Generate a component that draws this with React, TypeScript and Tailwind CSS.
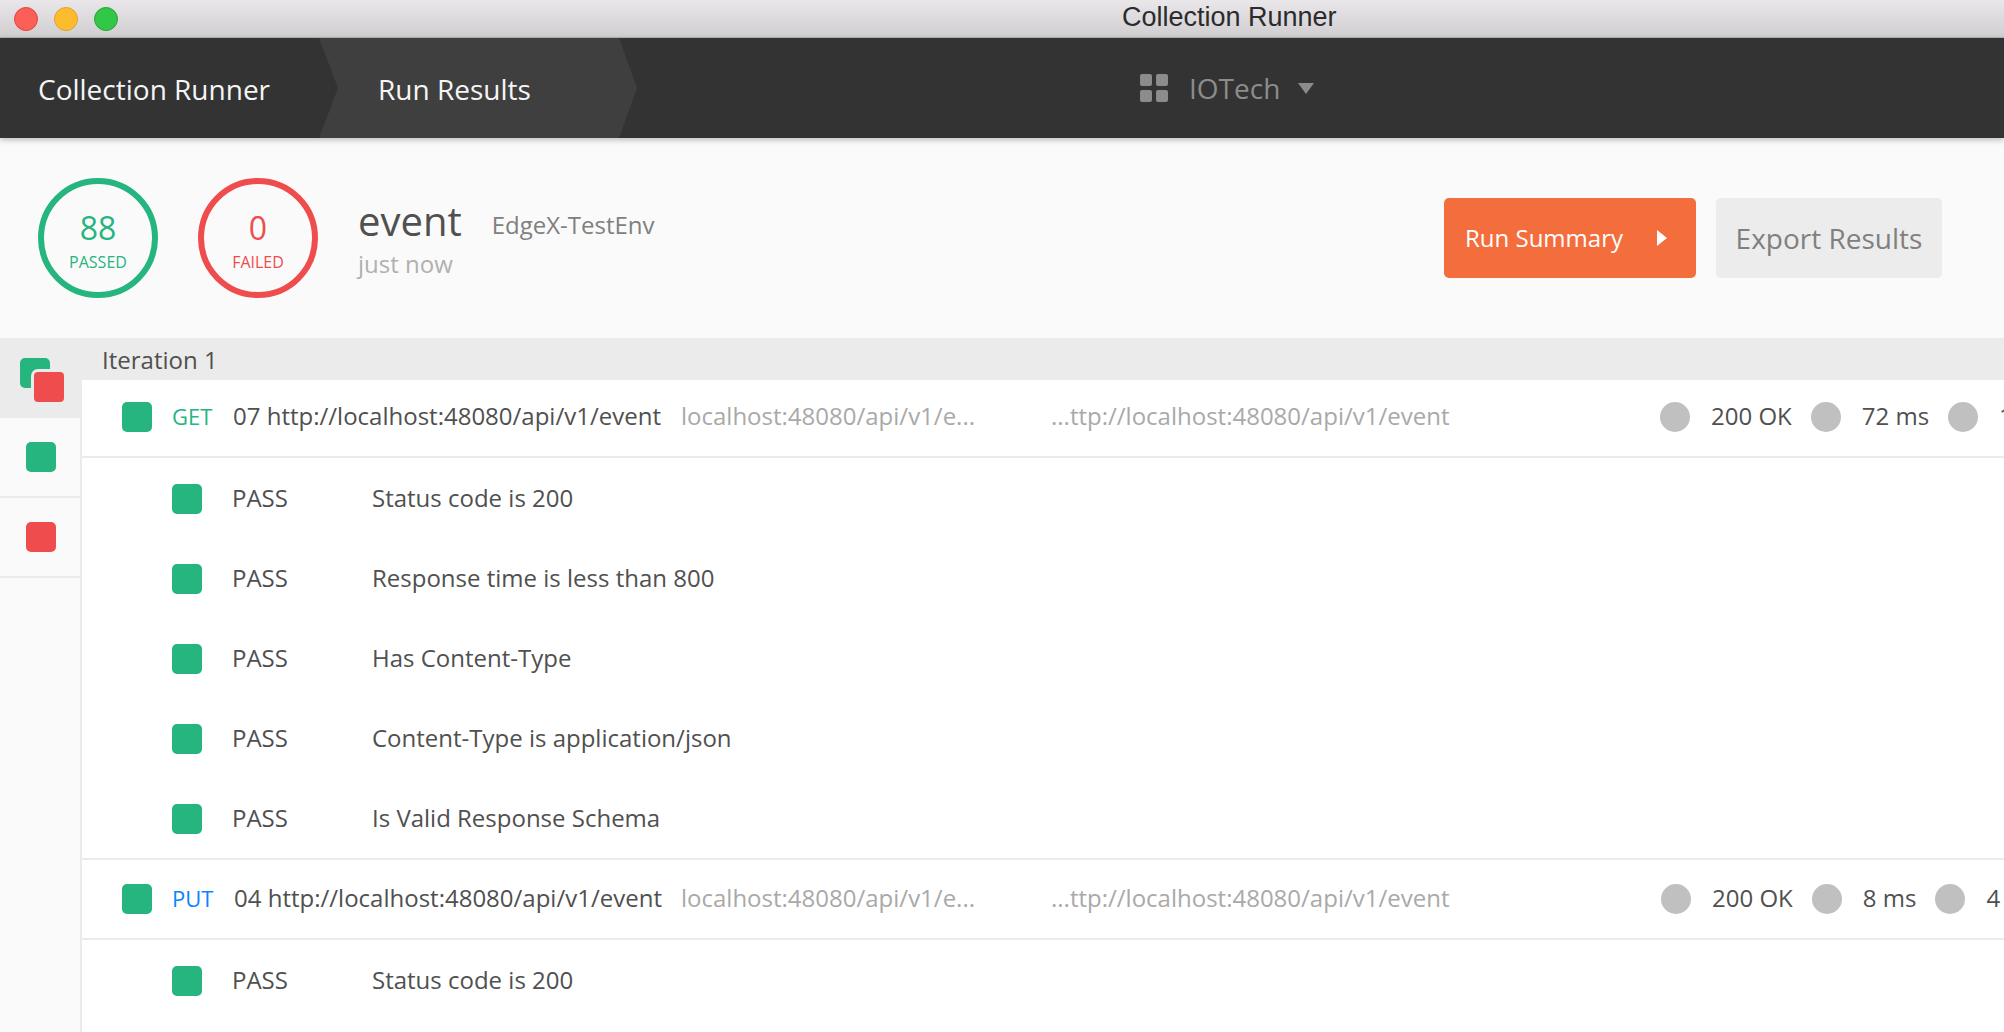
const FONT = "font-['Open_Sans',sans-serif]"

const tests1 = [
  'Status code is 200',
  'Response time is less than 800',
  'Has Content-Type',
  'Content-Type is application/json',
  'Is Valid Response Schema',
]

function Square({ color = 'bg-[#26b47f]' }: { color?: string }) {
  return <span className={`block h-[30px] w-[30px] shrink-0 rounded-[5px] ${color}`} />
}

function Dot() {
  return <span className="block h-[30px] w-[30px] shrink-0 rounded-full bg-[#c0c0c0]" />
}

function RequestRow({ method, color, name, stats, rowClass, methodWidth, nameWidth, statsWidth }: {
  method: string
  color: string
  name: string
  stats: string[]
  rowClass: string
  methodWidth: string
  nameWidth: string
  statsWidth: string
}) {
  return (
    <div className={`flex shrink-0 items-center border-b-2 border-[#ebebeb] pl-[40px] text-[24px] text-[#505050] whitespace-nowrap ${rowClass}`}>
      <Square />
      <span className={`ml-[20px] -translate-y-[1px] text-[22px] ${methodWidth} ${color}`}>{method}</span>
      <span className={`-translate-y-[1px] ${nameWidth}`}>{name}</span>
      <span className="w-[370px] -translate-y-[1px] text-[#a9a9a9]">localhost:48080/api/v1/e...</span>
      <span className="-translate-y-[1px] text-[#a9a9a9]">...ttp://localhost:48080/api/v1/event</span>
      <span className={`ml-auto flex shrink-0 items-center gap-[19px] ${statsWidth}`}>
        {stats.map(s => (
          <span key={s} className="flex items-center gap-[21px]">
            <Dot />
            <span className="-translate-y-[1px]">{s}</span>
          </span>
        ))}
      </span>
    </div>
  )
}

function TestRow({ name }: { name: string }) {
  return (
    <div className="flex h-[80px] shrink-0 items-center pl-[90px] pt-[2px] text-[24px] text-[#505050]">
      <Square />
      <span className="ml-[30px] w-[140px] leading-[30px] -translate-y-[1px]">PASS</span>
      <span className="-translate-y-[1px]">{name}</span>
    </div>
  )
}

function Ring({ value, label, color }: { value: string; label: string; color: string }) {
  return (
    <div className={`flex h-[120px] w-[120px] shrink-0 flex-col items-center rounded-full border-[6px] pt-[22px] ${color}`}>
      <span className="text-[32px] leading-[44px]">{value}</span>
      <span className="mt-[1px] text-[16px] leading-[22px]">{label}</span>
    </div>
  )
}

export default function App() {
  return (
    <div className={`flex h-screen w-full flex-col overflow-hidden bg-white ${FONT}`}>
      <div className="relative flex h-[38px] shrink-0 items-center gap-[16px] border-b border-[#b4b4b4] bg-gradient-to-b from-[#e9e7e9] to-[#d0ced0] pl-[14px]">
        <span className="h-[24px] w-[24px] rounded-full border border-[#e2463f] bg-[#fc5f57]" />
        <span className="h-[24px] w-[24px] rounded-full border border-[#e1a12a] bg-[#fdbc2e]" />
        <span className="h-[24px] w-[24px] rounded-full border border-[#2aa43a] bg-[#33c748]" />
        <span className="absolute left-[1122px] top-0 font-['Liberation_Sans',sans-serif] text-[27px] leading-[34px] text-[#2b2b2b]">Collection Runner</span>
      </div>

      <div className="relative z-10 flex h-[100px] shrink-0 items-center bg-[#333333] shadow-[0_2px_6px_rgba(0,0,0,0.25)]">
        <div className="w-[319px] pl-[38px] pt-[1px] text-[28px] text-[#f5f5f5]">Collection Runner</div>
        <div className="flex h-full w-[318px] items-center bg-[#3f3f3f] pl-[59px] pt-[1px] text-[28px] text-[#f5f5f5] [clip-path:polygon(0_0,300px_0,318px_50px,300px_100px,0_100px,19px_50px)]">Run Results</div>
        <div className="ml-[503px] flex items-center text-[#8c8c8c]">
          <span className="grid grid-cols-2 gap-[4px]">
            <span className="h-[12px] w-[12px] rounded-[2px] bg-[#8c8c8c]" />
            <span className="h-[12px] w-[12px] rounded-[2px] bg-[#8c8c8c]" />
            <span className="h-[12px] w-[12px] rounded-[2px] bg-[#8c8c8c]" />
            <span className="h-[12px] w-[12px] rounded-[2px] bg-[#8c8c8c]" />
          </span>
          <span className="ml-[21px] text-[28px]">IOTech</span>
          <svg className="ml-[18px]" width="16" height="11" viewBox="0 0 16 11"><path d="M0 0h16L8 11z" fill="#8c8c8c" /></svg>
        </div>
      </div>

      <div className="flex h-[200px] shrink-0 items-start bg-[#fafafa] pl-[38px] pt-[40px]">
        <Ring value="88" label="PASSED" color="border-[#26b47f] text-[#26b47f]" />
        <div className="ml-[40px]">
          <Ring value="0" label="FAILED" color="border-[#ef4d4d] text-[#ef4d4d]" />
        </div>
        <div className="ml-[40px] pt-[18px]">
          <div className="flex items-baseline">
            <span className="text-[40px] leading-[50px] text-[#505050]">event</span>
            <span className="ml-[30px] -translate-y-[2px] text-[24px] text-[#808080]">EdgeX-TestEnv</span>
          </div>
          <div className="text-[24px] leading-[36px] text-[#b0b0b0]">just now</div>
        </div>
        <div className="ml-auto mr-[62px] mt-[20px] flex gap-[20px]">
          <button className="flex h-[80px] w-[252px] items-center rounded-[5px] bg-[#f46d3d] pl-[21px] text-[24px] font-medium text-white">
            Run Summary
            <svg className="ml-[34px]" width="10" height="16" viewBox="0 0 10 16"><path d="M0 0l10 8-10 8z" fill="#fff" /></svg>
          </button>
          <button className="h-[80px] w-[226px] rounded-[5px] bg-[#ececec] text-[28px] text-[#808080]">Export Results</button>
        </div>
      </div>

      <div className="flex min-h-0 flex-1">
        <div className="flex w-[82px] shrink-0 flex-col border-r-2 border-[#ebebeb] bg-[#fafafa]">
          <div className="relative h-[80px] bg-[#ebebeb]">
            <span className="absolute left-[20px] top-[20px] h-[30px] w-[30px] rounded-[5px] bg-[#26b47f]" />
            <span className="absolute left-[31px] top-[31px] h-[36px] w-[36px] rounded-[7px] border-[3px] border-[#ebebeb] bg-[#ef4d4d]" />
          </div>
          <div className="flex h-[80px] items-center justify-center border-b-2 border-[#ebebeb] pl-[2px]">
            <Square />
          </div>
          <div className="flex h-[80px] items-center justify-center border-b-2 border-[#ebebeb] pl-[2px]">
            <Square color="bg-[#ef4d4d]" />
          </div>
        </div>

        <div className="flex min-w-0 flex-1 flex-col">
          <div className="flex h-[42px] shrink-0 items-center bg-[#ebebeb] pl-[20px] pt-[2px] text-[24px] text-[#505050]">Iteration 1</div>
          <RequestRow method="GET" color="text-[#26b47f]" name="07 http://localhost:48080/api/v1/event" stats={['200 OK', '72 ms', '1.2 KB']} rowClass="h-[78px] pb-[2px]" methodWidth="w-[61px]" nameWidth="w-[448px]" statsWidth="w-[344px]" />
          <div className="flex flex-col border-b-2 border-[#ebebeb]">
            {tests1.map(t => <TestRow key={t} name={t} />)}
          </div>
          <RequestRow method="PUT" color="text-[#0a84ff]" name="04 http://localhost:48080/api/v1/event" stats={['200 OK', '8 ms', '4 KB']} rowClass="h-[80px]" methodWidth="w-[62px]" nameWidth="w-[447px]" statsWidth="w-[343px]" />
          <TestRow name="Status code is 200" />
        </div>
      </div>
    </div>
  )
}
